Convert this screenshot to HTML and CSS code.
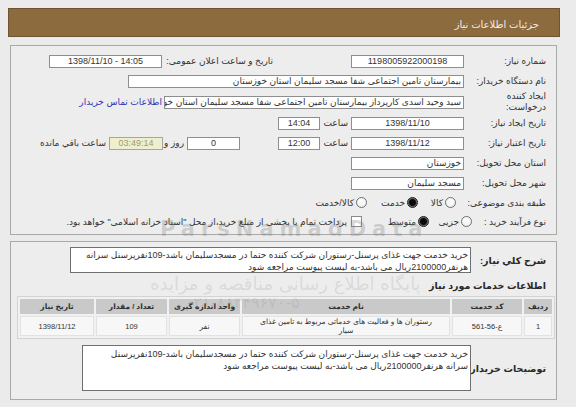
FILE: index.html
```html
<!DOCTYPE html>
<html lang="fa" dir="rtl">
<head>
<meta charset="utf-8">
<title>جزئیات اطلاعات نیاز</title>
<link rel="stylesheet" href="styles.css">
</head>
<body>
<div class="page">
  <div class="titlebar"><span class="title">جزئیات اطلاعات نیاز</span></div>

  <div class="panel main">
    <div class="row">
      <div class="lbl">شماره نیاز:</div>
      <div class="box w-std center ltr">1198005922000198</div>
      <div class="lbl-pub">تاریخ و ساعت اعلان عمومی:</div>
      <div class="box w-pub center ltr">1398/11/10 - 14:05</div>
    </div>
    <div class="row">
      <div class="lbl">نام دستگاه خریدار:</div>
      <div class="box w-org">بیمارستان تامین اجتماعی شفا مسجد سلیمان استان خوزستان</div>
    </div>
    <div class="row tall">
      <div class="lbl two">ایجاد کننده<br>درخواست:</div>
      <div class="box w-req">سید وحید اسدی کارپرداز بیمارستان تامین اجتماعی شفا مسجد سلیمان استان خوزستان</div>
      <a class="link" href="#">اطلاعات تماس خریدار</a>
    </div>
    <div class="row">
      <div class="lbl">تاریخ ایجاد نیاز:</div>
      <div class="box w-std center ltr">1398/11/10</div>
      <div class="lbl-hour">ساعت</div>
      <div class="box w-time center ltr">14:04</div>
    </div>
    <div class="row">
      <div class="lbl">تاریخ اعتبار نیاز:</div>
      <div class="box w-std center ltr">1398/11/12</div>
      <div class="lbl-hour">ساعت</div>
      <div class="box w-time center ltr">12:00</div>
      <div class="box w-days center ltr">0</div>
      <div class="lbl-day">روز و</div>
      <div class="box w-remain center ltr remain">03:49:14</div>
      <div class="lbl-remain">ساعت باقي مانده</div>
    </div>
    <div class="row">
      <div class="lbl">استان محل تحویل:</div>
      <div class="box w-std">خوزستان</div>
    </div>
    <div class="row">
      <div class="lbl">شهر محل تحویل:</div>
      <div class="box w-std">مسجد سلیمان</div>
    </div>
    <div class="row short">
      <div class="lbl cat">طبقه بندی موضوعی:</div>
      <div class="opt o-goods"><span class="radio"></span><span>کالا</span></div>
      <div class="opt o-service"><span class="radio on"></span><span>خدمت</span></div>
      <div class="opt"><span class="radio"></span><span>کالا/خدمت</span></div>
    </div>
    <div class="row short">
      <div class="lbl proc">نوع فرآیند خرید :</div>
      <div class="opt o-minor"><span class="radio"></span><span>جزیی</span></div>
      <div class="opt o-medium"><span class="radio on"></span><span>متوسط</span></div>
      <div class="opt"><span class="check"></span><span>پرداخت تمام یا بخشی از مبلغ خرید،از محل "اسناد خزانه اسلامی" خواهد بود.</span></div>
    </div>
  </div>

  <div class="panel detail">
    <div class="drow">
      <div class="blbl">شرح کلي نیاز:</div>
      <div class="tbox desc">
        <div class="line">خرید خدمت جهت غذای پرسنل-رستوران شرکت کننده حتما در مسجدسلیمان باشد-109نفرپرسنل سرانه</div>
        <div class="line">هرنفر2100000ریال می باشد-به لیست پیوست مراجعه شود</div>
      </div>
    </div>
    <div class="section">اطلاعات خدمات مورد نیاز</div>
    <table class="grid">
      <thead>
        <tr>
          <th class="c-no">ردیف</th>
          <th class="c-code">کد خدمت</th>
          <th class="c-name">نام خدمت</th>
          <th class="c-unit">واحد اندازه گیری</th>
          <th class="c-qty">تعداد / مقدار</th>
          <th class="c-date">تاریخ نیاز</th>
        </tr>
      </thead>
      <tbody>
        <tr>
          <td>1</td>
          <td><span class="ltr">561-56-ع</span></td>
          <td class="name">رستوران ها و فعالیت های خدماتی مربوط به تامین غذای<br>سیار</td>
          <td>نفر</td>
          <td>109</td>
          <td>1398/11/12</td>
        </tr>
      </tbody>
    </table>
    <div class="drow notes">
      <div class="blbl">توضیحات خریدار:</div>
      <div class="tbox note">
        <div class="line">خرید خدمت جهت غذای پرسنل-رستوران شرکت کننده حتما در مسجدسلیمان باشد-109نفرپرسنل</div>
        <div class="line">سرانه هرنفر2100000ریال می باشد-به لیست پیوست مراجعه شود</div>
      </div>
    </div>
  </div>
</div>

<div class="wm wm-latin">ParsNamadData</div>
<div class="wm wm-fa">پایگاه اطلاع رسانی مناقصه و مزایده</div>
<div class="wm wm-tel">۰۲۱-۸۸۳۴۹۶۷۰-۵</div>
</body>
</html>
```

FILE: styles.css
```css
* { box-sizing: border-box; }

html, body {
  margin: 0;
  padding: 0;
}

body {
  width: 576px;
  height: 407px;
  overflow: hidden;
  position: relative;
  background: #ebebeb;
  color: #333;
  font-family: "Liberation Sans", "DejaVu Sans", sans-serif;
  font-size: 9px;
}

.page {
  direction: rtl;
  padding: 8px 16px 0 8px;
}

.ltr { direction: ltr; unicode-bidi: embed; }

/* title bar */
.titlebar {
  height: 29px;
  background: #8c6b3f;
  border: 1px solid #6f5430;
  display: flex;
  align-items: center;
  padding: 3px 20px 0 0;
}
.title {
  color: #f3ede2;
  font-size: 10px;
}

/* panels */
.panel {
  margin: 8px 3px 0 2px;
  border: 1px solid #a9a9a9;
  background: #ededed;
}

.main { padding: 5px 10px 3px 10px; }

.row {
  display: flex;
  align-items: center;
  height: 20px;
}
.row.tall { height: 22px; }
.row.short { height: 19px; }

.lbl {
  width: 82px;
  flex: none;
  white-space: nowrap;
}
.lbl.two { line-height: 11px; }
.lbl.cat { width: 90px; }
.lbl.proc { width: 74px; }

.box {
  flex: none;
  height: 13px;
  border: 1px solid #8e8e8e;
  background: #fff;
  padding: 0 2px;
  line-height: 11px;
  white-space: nowrap;
  overflow: hidden;
  color: #333;
}
.box.center { text-align: center; }

.w-std { width: 113px; }
.w-pub { width: 113px; margin-right: 1px; }
.w-org { width: 336px; }
.w-req { width: 300px; }
.w-time { width: 42px; }
.w-days { width: 53px; margin-right: 38px; }
.w-remain { width: 54px; }

.remain {
  background: #efefcd;
  border-color: #a5a5a5;
  color: #9d9d78;
}

.lbl-pub {
  width: 110px;
  margin-right: 78px;
  white-space: nowrap;
}
.lbl-hour {
  width: 31px;
  padding-right: 3px;
  white-space: nowrap;
}
.lbl-day {
  width: 24px;
  padding-right: 3px;
  white-space: nowrap;
}
.lbl-remain {
  padding-right: 3px;
  white-space: nowrap;
}

.link {
  margin-right: 2px;
  color: #2f34b5;
  text-decoration: none;
  white-space: nowrap;
}

/* radios */
.opt {
  display: flex;
  align-items: center;
  flex: none;
  white-space: nowrap;
}
.opt > span + span { margin-right: 2px; }
.o-goods { width: 38px; }
.o-service { width: 51px; }
.o-minor { width: 43px; }
.o-medium { width: 67px; }

.radio {
  width: 11px;
  height: 11px;
  flex: none;
  border-radius: 50%;
  border: 1px solid #6f6f6f;
  background: radial-gradient(circle at 50% 40%, #ffffff 0, #f4f4f4 60%, #dcdcdc 100%);
}
.radio.on {
  border-color: #1d1d1d;
  background: radial-gradient(circle, #0a0a0a 0 3px, #3c3c3c 3.6px, #8a8a8a 4.6px, #cfcfcf 100%);
}
.check {
  width: 11px;
  height: 11px;
  flex: none;
  border: 1px solid #8a8a8a;
  background: #fff;
  margin-left: 2px;
}

/* detail panel */
.detail {
  margin-top: 6px;
  padding: 5px 10px 8px 10px;
}

.drow {
  display: flex;
  align-items: center;
}
.blbl {
  width: 75px;
  flex: none;
  font-weight: bold;
  font-size: 9.5px;
  color: #2a2a2a;
  white-space: nowrap;
}

.tbox {
  flex: none;
  border: 1px solid #6f6f6f;
  background: #fff;
  padding: 2px 2px;
  line-height: 11.5px;
  color: #333;
  overflow: hidden;
}
.tbox .line { white-space: nowrap; }
.desc { width: 401px; height: 26px; }
.note { width: 389px; height: 46px; padding-top: 3px; }

.section {
  margin: 7px 0 4px 0;
  font-weight: bold;
  font-size: 9.5px;
  color: #2a2a2a;
  line-height: 12px;
}

.grid {
  width: 534px;
  margin-right: -9px;
  border-collapse: separate;
  border-spacing: 2px;
  background: #f1f1f1;
  border: 1px solid #d3d3d3;
  table-layout: fixed;
  font-size: 7.5px;
}
.grid th {
  height: 15px;
  background: #c9c9c9;
  color: #2f2f2f;
  font-weight: bold;
  padding: 0;
  line-height: 10px;
}
.grid td {
  height: 20px;
  background: #f7f7f7;
  text-align: center;
  padding: 0;
  line-height: 9px;
  border: 1px solid #e2e2e2;
}
.c-no { width: 28px; }
.c-code { width: 70px; }
.c-name { width: 208px; }
.c-unit { width: 71px; }
.c-qty { width: 71px; }
.c-date { width: 74px; }

.notes { margin-top: 6px; }

/* watermark overlays */
.wm {
  position: absolute;
  pointer-events: none;
  white-space: nowrap;
}
.wm-latin {
  left: 160px;
  top: 217px;
  font-family: "DejaVu Sans", sans-serif;
  font-weight: bold;
  font-size: 21px;
  letter-spacing: 6px;
  color: rgba(120, 120, 120, 0.28);
}
.wm-fa {
  left: 150px;
  top: 273px;
  font-family: "DejaVu Sans", sans-serif;
  font-size: 18px;
  color: rgba(120, 120, 120, 0.18);
}
.wm-tel {
  left: 185px;
  top: 293px;
  font-family: "DejaVu Sans", sans-serif;
  font-size: 16px;
  color: rgba(120, 120, 120, 0.16);
}
```
